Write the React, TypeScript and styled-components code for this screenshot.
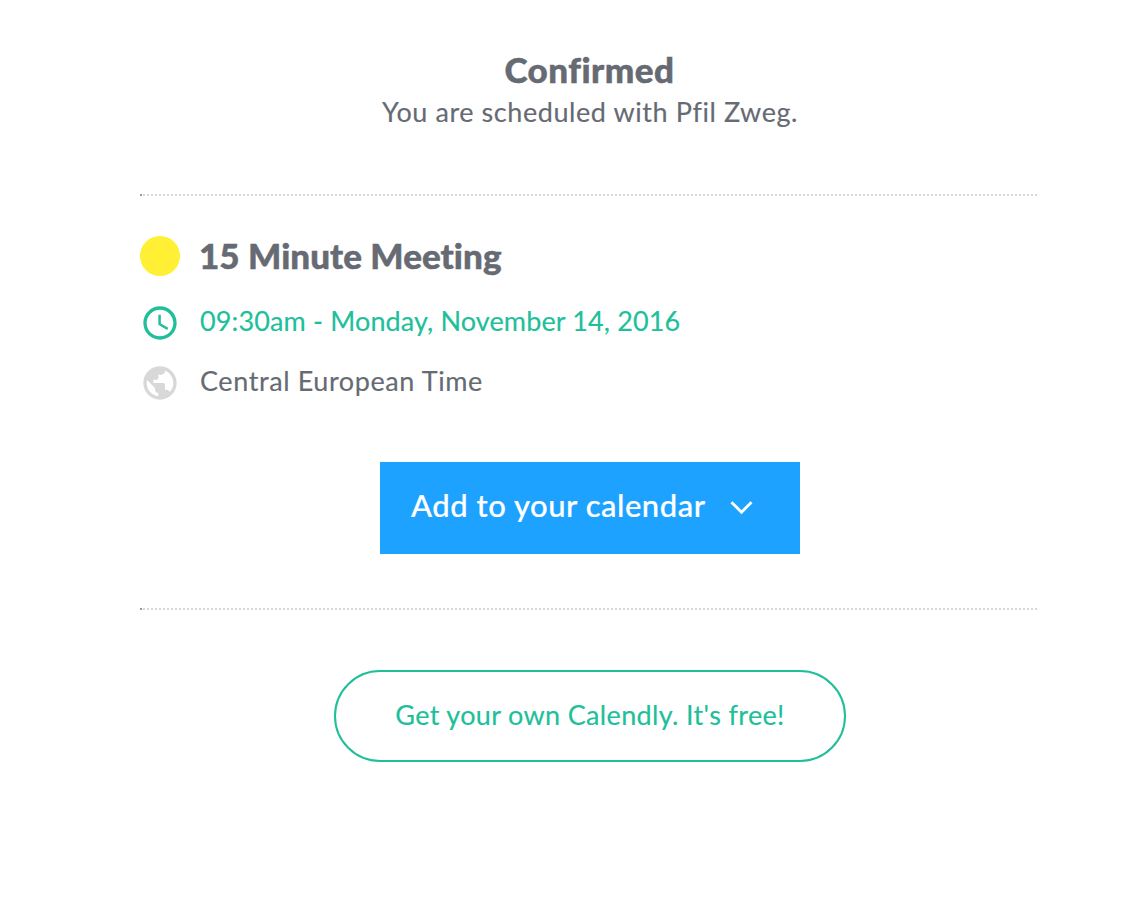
import React from "react";
import styled, { createGlobalStyle } from "styled-components";
import { MdAccessTime, MdPublic } from "react-icons/md";

const colors = {
  text: "#666a73",
  green: "#20bf9a",
  blue: "#1ea2ff",
  yellow: "#fff035",
  muted: "#d8d8d8",
};

const GlobalStyle = createGlobalStyle`
  * { box-sizing: border-box; }
  body {
    margin: 0;
    background: #fff;
    color: ${colors.text};
    font-family: Lato, "Liberation Sans", sans-serif;
    font-variant-ligatures: none;
  }
`;

const Page = styled.main`
  width: 899px;
  margin: 0 0 0 140px;
  padding-top: 49px;
  display: flex;
  flex-direction: column;
`;

const Header = styled.header`
  display: flex;
  flex-direction: column;
  align-items: center;
  height: 145px;
`;

const Title = styled.h1<{ $spacing: number }>`
  margin: 0;
  font-size: 35px;
  font-weight: 900;
  line-height: 40px;
  letter-spacing: ${(p) => p.$spacing}px;
  -webkit-text-stroke: 0.5px currentColor;
  white-space: nowrap;
`;

const Text = styled.span<{ $spacing: number; $color?: string }>`
  font-size: 27px;
  line-height: 40px;
  letter-spacing: ${(p) => p.$spacing}px;
  color: ${(p) => p.$color ?? "inherit"};
  -webkit-text-stroke: 0.15px currentColor;
  white-space: nowrap;
`;

const Subtitle = styled(Text)`
  margin: 3px 0 0 1px;
`;

const Divider = styled.div`
  height: 2px;
  background:
    linear-gradient(#999, #999) 0 0 / 2px 2px no-repeat,
    repeating-linear-gradient(90deg, ${colors.muted} 0 2px, transparent 2px 4px) 3px 0 no-repeat;
`;

const Details = styled.section`
  display: flex;
  flex-direction: column;
  gap: 20px;
  padding: 40px 0 60px;
`;

const Row = styled.div<{ $first?: boolean }>`
  display: flex;
  align-items: center;
  gap: 20px;
  height: 40px;
  margin-bottom: ${(p) => (p.$first ? 6 : 0)}px;

  svg { flex: none; margin-top: 1px; }
  ${Text} { margin-top: -2px; }
  ${Title} { margin: -2px 0 0 -1px; }
`;

const Dot = styled.span`
  width: 40px;
  height: 40px;
  border-radius: 50%;
  background: ${colors.yellow};
`;

const CalendarButton = styled.button`
  display: flex;
  align-items: center;
  align-self: center;
  width: 420px;
  height: 92px;
  margin: 0 0 54px 1px;
  padding: 0 46px 6px 31px;
  justify-content: space-between;
  border: 0;
  background: ${colors.blue};
  color: #fff;
  font: 500 31px/40px Lato, "Liberation Sans", sans-serif;
  letter-spacing: 0.52px;
  -webkit-text-stroke: 0.2px currentColor;
  white-space: nowrap;

  svg { margin-top: 5px; }
`;

const SignupButton = styled.button`
  align-self: center;
  width: 512px;
  height: 92px;
  margin: 60px 0 0 1px;
  padding: 0 0 3px;
  border: 2px solid ${colors.green};
  border-radius: 46px;
  background: transparent;
  color: ${colors.green};
  font: 400 27px/40px Lato, "Liberation Sans", sans-serif;
  letter-spacing: 0.34px;
  -webkit-text-stroke: 0.15px currentColor;
  white-space: nowrap;
`;

export default function App() {
  return (
    <>
      <GlobalStyle />
      <Page>
        <Header>
          <Title $spacing={0.5}>Confirmed</Title>
          <Subtitle $spacing={0.57}>You are scheduled with Pfil Zweg.</Subtitle>
        </Header>
        <Divider />
        <Details>
          <Row $first>
            <Dot />
            <Title as="h2" $spacing={0.05}>15 Minute Meeting</Title>
          </Row>
          <Row>
            <MdAccessTime size={40} color={colors.green} />
            <Text $spacing={0.13} $color={colors.green}>09:30am - Monday, November 14, 2016</Text>
          </Row>
          <Row>
            <MdPublic size={40} color={colors.muted} />
            <Text $spacing={0.6}>Central European Time</Text>
          </Row>
        </Details>
        <CalendarButton>
          Add to your calendar
          <svg width="24" height="15" viewBox="0 0 24 15" fill="none" stroke="#fff" strokeWidth="2.8">
            <path d="M1.5 2.3 11.5 12.2 21.5 2.3" />
          </svg>
        </CalendarButton>
        <Divider />
        <SignupButton>Get your own Calendly. It's free!</SignupButton>
      </Page>
    </>
  );
}
